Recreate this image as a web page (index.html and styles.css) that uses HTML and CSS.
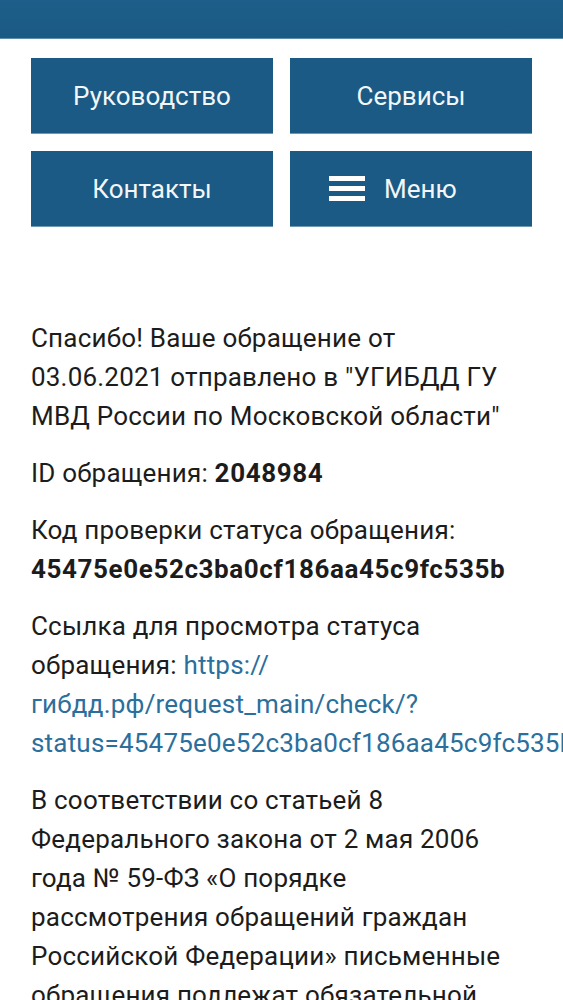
FILE: index.html
```html
<!DOCTYPE html>
<html lang="ru">
<head>
<meta charset="utf-8">
<title>Обращение</title>
<link rel="stylesheet" href="styles.css">
</head>
<body>
<div class="page">
  <header class="topbar"></header>
  <nav class="menu">
    <a class="btn" href="#">Руководство</a>
    <a class="btn" href="#">Сервисы</a>
    <a class="btn" href="#">Контакты</a>
    <a class="btn btn-menu" href="#">
      <svg class="burger" width="36" height="25" viewBox="0 0 36 25" aria-hidden="true">
        <rect x="0" y="0" width="36" height="5" fill="#ffffff"/>
        <rect x="0" y="10" width="36" height="5" fill="#ffffff"/>
        <rect x="0" y="20" width="36" height="5" fill="#ffffff"/>
      </svg>
      <span>Меню</span>
    </a>
  </nav>
  <main class="content">
    <p>Спасибо! Ваше обращение от 03.06.2021 отправлено в "УГИБДД ГУ МВД России по Московской области"</p>
    <p>ID обращения: <b>2048984</b></p>
    <p>Код проверки статуса обращения: <b>45475e0e52c3ba0cf186aa45c9fc535b</b></p>
    <p>Ссылка для просмотра статуса обращения: <a class="link" href="#"><span class="seg">https://</span> <span class="seg">гибдд.рф/request_main/check/?</span> <span class="seg">status=45475e0e52c3ba0cf186aa45c9fc535b</span></a></p>
    <p>В соответствии со статьей 8 Федерального закона от 2 мая 2006 года № 59-ФЗ «О порядке рассмотрения обращений граждан Российской Федерации» письменные обращения подлежат обязательной регистрации в течение трех дней с момента поступления.</p>
  </main>
</div>
</body>
</html>
```
FILE: styles.css
```css
html, body {
  margin: 0;
  padding: 0;
  background: #ffffff;
}
body {
  font-family: Roboto, "Noto Sans", sans-serif;
  color: #1c1c1c;
  overflow-x: hidden;
}
.page {
  width: 563px;
  overflow: hidden;
}
.topbar {
  height: 38px;
  background: linear-gradient(#1d5f8a, #1a5983);
  border-bottom: 1px solid #5d8dab;
}
.menu {
  display: grid;
  grid-template-columns: 242px 242px;
  column-gap: 17px;
  row-gap: 18px;
  padding: 19px 31px 0 31px;
}
.btn {
  height: 75px;
  background: #1a5a84;
  color: #f2f6f9;
  text-decoration: none;
  font-size: 26px;
  display: flex;
  align-items: center;
  justify-content: center;
  box-shadow: 0 1px 0 #6f98b3;
}
.btn-menu {
  justify-content: flex-start;
  gap: 19px;
  padding-left: 39px;
}
.burger {
  display: block;
}
.content {
  width: 480px;
  padding: 93px 0 0 31px;
  font-size: 26px;
  line-height: 39px;
  letter-spacing: 0.2px;
}
.content p {
  margin: 0 0 18px 0;
}
.content b {
  font-weight: 700;
  letter-spacing: 0.6px;
}
.link {
  color: #2b6f9c;
  text-decoration: none;
}
.seg {
  white-space: nowrap;
}
```
